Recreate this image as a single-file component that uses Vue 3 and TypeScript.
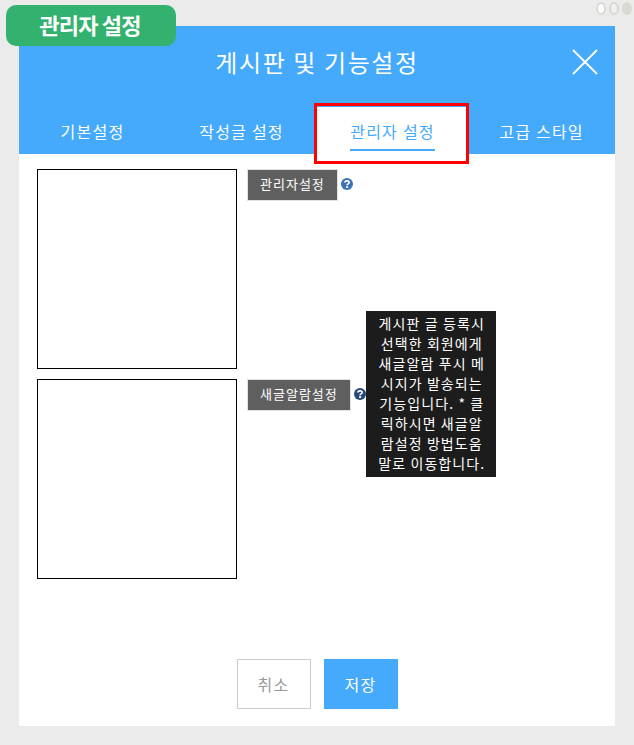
<script setup lang="ts">
const tabs = [
  { label: '기본설정', active: false },
  { label: '작성글 설정', active: false },
  { label: '관리자 설정', active: true },
  { label: '고급 스타일', active: false },
];

const settings = [
  { label: '관리자설정', dark: false, tip: '' },
  {
    label: '새글알람설정',
    dark: true,
    tip: '게시판 글 등록시 선택한 회원에게 새글알람 푸시 메시지가 발송되는 기능입니다. * 클릭하시면 새글알람설정 방법도움말로 이동합니다.',
  },
];
</script>

<template>
  <div class="page">
    <div class="badge">관리자 설정</div>
    <div class="dots">
      <span class="dot" />
      <span class="dot" />
      <span class="dot filled" />
    </div>

    <div class="modal">
      <header class="head">
        <div class="title-row">
          <h1 class="title">게시판 및 기능설정</h1>
          <svg class="close" width="26" height="26" viewBox="0 0 26 26">
            <path d="M1 1 L25 25 M25 1 L1 25" stroke="#fff" stroke-width="1.8" fill="none" />
          </svg>
        </div>
        <nav class="tabs">
          <div v-for="tab in tabs" :key="tab.label" class="tab" :class="{ active: tab.active }">
            <span class="tab-label">{{ tab.label }}</span>
          </div>
        </nav>
      </header>

      <div class="body">
        <div v-for="item in settings" :key="item.label" class="row">
          <div class="box" />
          <div class="field">
            <span class="label">{{ item.label }}</span>
            <span class="help-wrap">
              <svg class="help" :class="{ dark: item.dark }" width="12" height="12" viewBox="0 0 12 12">
                <circle cx="6" cy="6" r="6" fill="currentColor" />
                <path d="M3.9 4.6 C3.9 2.3 8.2 2.3 8.2 4.5 C8.2 5.9 6.1 5.8 6.1 7.2" stroke="#fff" stroke-width="1.7" fill="none" />
                <rect x="5.1" y="8.1" width="2" height="1.8" fill="#fff" />
              </svg>
              <div v-if="item.tip" class="tip">{{ item.tip }}</div>
            </span>
          </div>
        </div>
      </div>

      <footer class="actions">
        <button class="btn cancel" type="button">취소</button>
        <button class="btn save" type="button">저장</button>
      </footer>
    </div>

    <div class="highlight" />
  </div>
</template>

<style>
html,
body {
  margin: 0;
  background: #ebebeb;
  overflow: hidden;
}
</style>

<style scoped>
.page {
  position: relative;
  box-sizing: border-box;
  width: 634px;
  height: 745px;
  padding: 26px 19px 19px;
  background: #ebebeb;
  font-family: "Noto Sans CJK KR", "Noto Sans", sans-serif;
}

.badge {
  position: absolute;
  left: 6px;
  top: 5px;
  z-index: 2;
  box-sizing: border-box;
  width: 170px;
  height: 41px;
  padding-right: 2px;
  border-radius: 10px;
  background: #33b26f;
  color: #fff;
  font-size: 22px;
  font-weight: 700;
  letter-spacing: -0.8px;
  line-height: 39px;
  text-align: center;
}

.dots {
  position: absolute;
  right: 2px;
  top: 2px;
  display: flex;
  gap: 3px;
}

.dot {
  box-sizing: border-box;
  width: 10px;
  height: 13px;
  border: 2px solid #d9d9d4;
  border-radius: 50%;
  background: #fff;
}

.dot:nth-child(2) {
  background: #efefef;
}

.dot.filled {
  background: #d9d9d4;
}

.modal {
  display: flex;
  flex-direction: column;
  height: 700px;
  background: #fff;
}

.head {
  height: 128px;
  background: #45aafb;
  color: #fff;
}

.title-row {
  position: relative;
  height: 81px;
}

.title {
  margin: 0;
  font-size: 24px;
  font-weight: 400;
  letter-spacing: 1.6px;
  line-height: 72px;
  text-align: center;
}

.close {
  position: absolute;
  right: 17px;
  top: 23px;
}

.tabs {
  display: grid;
  grid-template-columns: 147px 151px 151px 147px;
  height: 47px;
}

.tab {
  display: flex;
  justify-content: center;
  padding-top: 12px;
  font-size: 16px;
  letter-spacing: 1.25px;
  line-height: 24px;
}

.tab.active {
  background: #fff;
  color: #45aafb;
}

.tab-label {
  height: 32px;
}

.tab.active .tab-label {
  box-sizing: border-box;
  border-bottom: 2px solid #45aafb;
}

.body {
  display: flex;
  flex: 1;
  flex-direction: column;
  gap: 10px;
  padding: 15px 18px 0;
}

.row {
  display: flex;
  gap: 11px;
}

.box {
  box-sizing: border-box;
  width: 200px;
  height: 200px;
  border: 1px solid #000;
}

.field {
  display: flex;
  align-items: flex-start;
  padding-top: 1px;
}

.label {
  padding: 0 12px 2px;
  background: #5f5f5f;
  box-shadow: 0 0 0 1px #e2e2e2;
  color: #fff;
  font-size: 13px;
  letter-spacing: 1px;
  line-height: 28px;
}

.help-wrap {
  position: relative;
  display: block;
  margin: 8px 0 0 4px;
}

.help {
  display: block;
  color: #3a74b4;
}

.help.dark {
  color: #254a78;
}

.tip {
  position: absolute;
  left: 12px;
  top: -77px;
  box-sizing: border-box;
  width: 130px;
  height: 166px;
  padding: 2px 9px 0 11px;
  background: #1c1c1c;
  color: #fff;
  font-size: 14px;
  letter-spacing: 1.1px;
  line-height: 20px;
  text-align: center;
}

.actions {
  display: flex;
  justify-content: center;
  gap: 13px;
  padding: 0 0 17px;
}

.btn {
  box-sizing: border-box;
  width: 74px;
  height: 50px;
  padding: 0;
  border: 0;
  font-family: inherit;
  font-size: 16px;
  letter-spacing: 1.3px;
}

.cancel {
  border: 1px solid #ccc;
  background: #fff;
  color: #999;
}

.save {
  background: #45aafb;
  color: #fff;
}

.highlight {
  position: absolute;
  left: 314px;
  top: 103px;
  box-sizing: border-box;
  width: 155px;
  height: 61px;
  border: 3px solid #f00;
  pointer-events: none;
}
</style>
